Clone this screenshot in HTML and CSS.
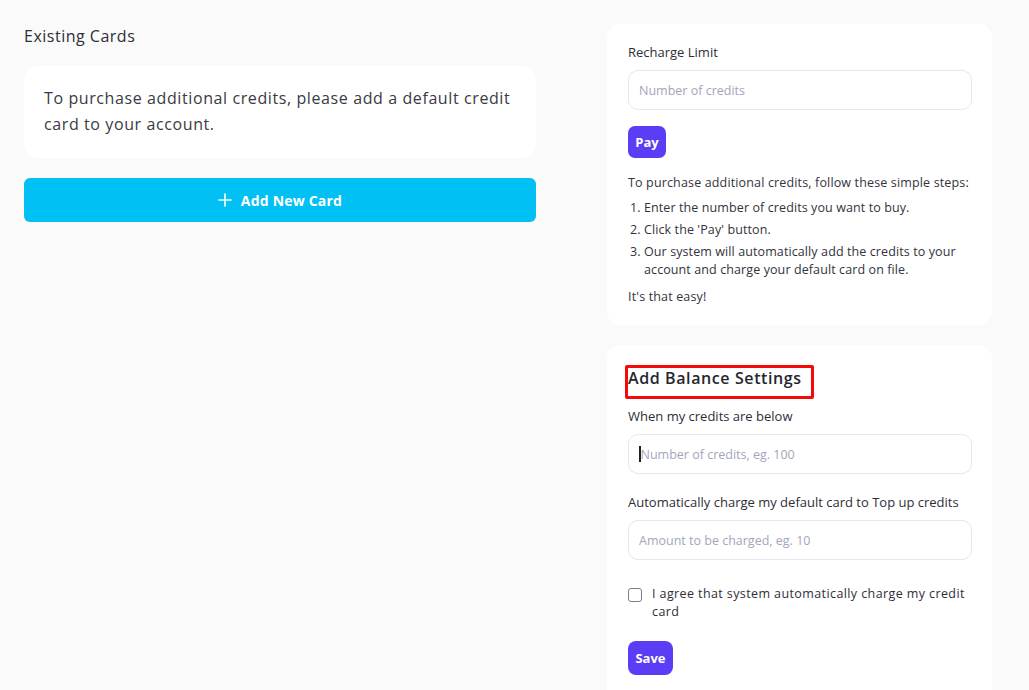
FILE: index.html
```html
<!DOCTYPE html>
<html>
<head>
<meta charset="utf-8">
<link rel="stylesheet" href="styles.css">
</head>
<body>
<div class="page">
  <section class="left">
    <h2 class="section-title">Existing Cards</h2>
    <div class="card notice">
      <p>To purchase additional credits, please add a default credit card to your account.</p>
    </div>
    <button class="add-btn">
      <svg class="plus" width="14" height="14" viewBox="0 0 14 14"><path d="M7 1v12M1 7h12" stroke="#fff" stroke-width="1.6" stroke-linecap="round"/></svg>
      <span>Add New Card</span>
    </button>
  </section>
  <section class="right">
    <div class="card panel">
      <label class="label">Recharge Limit</label>
      <div class="input"><span class="ph">Number of credits</span></div>
      <button class="btn-purple pay">Pay</button>
      <p class="info">To purchase additional credits, follow these simple steps:</p>
      <ol class="steps">
        <li>Enter the number of credits you want to buy.</li>
        <li>Click the 'Pay' button.</li>
        <li>Our system will automatically add the credits to your account and charge your default card on file.</li>
      </ol>
      <p class="info easy">It's that easy!</p>
    </div>
    <div class="card panel panel2">
      <h3 class="panel-title"><span class="hl">Add Balance Settings</span></h3>
      <label class="label">When my credits are below</label>
      <div class="input focused"><span class="caret"></span><span class="ph">Number of credits, eg. 100</span></div>
      <label class="label label2">Automatically charge my default card to Top up credits</label>
      <div class="input"><span class="ph">Amount to be charged, eg. 10</span></div>
      <div class="agree">
        <span class="checkbox"></span>
        <span class="agree-text">I agree that system automatically charge my credit card</span>
      </div>
      <button class="btn-purple save">Save</button>
    </div>
  </section>
</div>
</body>
</html>
```
FILE: styles.css
```css
* { box-sizing: border-box; }
html, body { margin: 0; padding: 0; }
body {
  background: #fafafa;
  font-family: "Open Sans", "Noto Sans", sans-serif;
  color: #2b2b36;
  height: 690px;
  overflow: hidden;
}
.page {
  display: flex;
  padding: 24px 0 0 24px;
  gap: 71px;
}
.left { width: 512px; display: flex; flex-direction: column; }
.section-title {
  margin: 0;
  font-size: 16px;
  line-height: 24px;
  font-weight: 500;
  letter-spacing: 0.5px;
  color: #2e2e38;
}
.card { background: #fff; border-radius: 14px; }
.notice {
  margin-top: 18px;
  padding: 19px 20px 21px;
}
.notice p {
  margin: 0;
  font-size: 16px;
  line-height: 26px;
  font-weight: 400;
  letter-spacing: 0.6px;
  color: #3a3a44;
}
.add-btn {
  margin-top: 20px;
  height: 44px;
  border: 0;
  border-radius: 6px;
  background: #01c0f4;
  color: #fff;
  font-family: inherit;
  font-size: 14px;
  font-weight: 700;
  letter-spacing: 0.2px;
  display: flex;
  align-items: center;
  justify-content: center;
  gap: 9px;
}
.right { width: 385px; display: flex; flex-direction: column; gap: 20px; }
.panel { padding: 18px 20px 19px 21px; display: flex; flex-direction: column; align-items: flex-start; }
.label {
  font-size: 13px;
  line-height: 20px;
  font-weight: 500;
  color: #2e2e38;
}
.input {
  margin-top: 8px;
  width: 100%;
  height: 40px;
  border: 1px solid #e6e6ec;
  border-radius: 10px;
  display: flex;
  align-items: center;
  padding: 0 10px;
  position: relative;
}
.ph { font-size: 12.5px; color: #a3a5bb; }
.focused .caret {
  width: 1.5px; height: 16px; background: #222; margin-right: 0;
}
.btn-purple {
  border: 0;
  background: #5a3df5;
  color: #fff;
  font-family: inherit;
  font-weight: 700;
  font-size: 13px;
  border-radius: 7px;
  padding: 0;
}
.pay { margin-top: 16px; width: 38px; height: 32px; }
.info { margin: 16px 0 0; font-size: 12.5px; line-height: 18px; letter-spacing: 0.15px; color: #33333d; }
.steps { margin: 7px 0 0; padding-left: 16px; font-size: 12.5px; line-height: 18px; letter-spacing: 0.1px; color: #33333d; }
.steps li { margin-bottom: 4px; }
.steps li:last-child { margin-bottom: 0; }
.easy { margin-top: 9px; }
.panel2 { padding-top: 21px; height: 360px; border-radius: 14px 14px 0 0; }
.panel-title {
  margin: 0 0 16px;
  font-size: 16px;
  line-height: 24px;
  font-weight: 600;
  letter-spacing: 0.6px;
  color: #262630;
}
.hl { position: relative; display: inline-block; }
.hl::after {
  content: "";
  position: absolute;
  left: -3px; right: -12px; top: -1px; bottom: -9px;
  border: 3px solid #f50a0a;
  border-radius: 2px;
}
.label2 { margin-top: 18px; }
.agree { margin-top: 25px; display: flex; gap: 10px; align-items: flex-start; }
.checkbox {
  flex: none;
  width: 14px; height: 14px;
  margin-top: 3px;
  border: 1px solid #7a7a8a;
  border-radius: 3px;
  background: #fff;
}
.agree-text { font-size: 12.5px; line-height: 18px; font-weight: 500; letter-spacing: 0.4px; color: #2e2e38; }
.save { margin-top: 20px; width: 45px; height: 34px; border-radius: 8px; }
```
